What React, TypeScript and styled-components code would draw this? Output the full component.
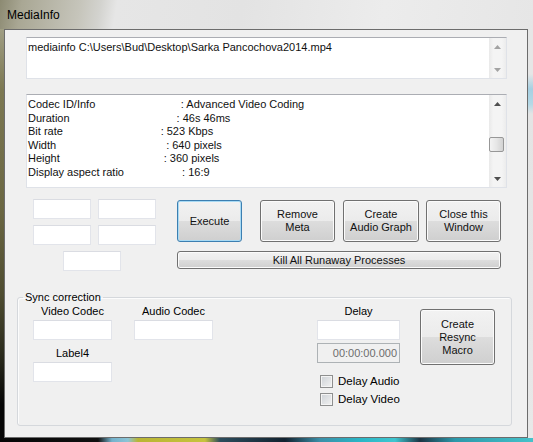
import React from "react";
import styled, { createGlobalStyle } from "styled-components";

const GlobalStyle = createGlobalStyle`
  html, body {
    margin: 0;
    padding: 0;
  }
  body {
    width: 533px;
    height: 442px;
    overflow: hidden;
    background: #000;
    font-family: "Liberation Sans", Arial, sans-serif;
  }
`;

// Window frame (Aero glass look)
const Window = styled.div`
  width: 533px;
  height: 442px;
  display: grid;
  grid-template-columns: 4px 1fr 5px;
  grid-template-rows: 29px 1fr 4px;
`;

const TitleBar = styled.div`
  grid-column: 1 / -1;
  display: flex;
  align-items: center;
  padding-left: 7px;
  font-size: 12px;
  color: #000;
  background: linear-gradient(
    100deg,
    #8c8a72 0px,
    #a9a794 22px,
    #c6c5bb 80px,
    #d3d3cf 100px,
    #e6e6e6 116px,
    #e3e3e3 240px,
    #ececec 380px,
    #e6e6e6 100%
  );
`;

const LeftEdge = styled.div`
  background: linear-gradient(
    #a09e84 0%,
    #7c7852 15%,
    #6a6642 45%,
    #4e4c30 65%,
    #2a2a1c 80%,
    #050505 92%
  );
`;

const RightEdge = styled.div`
  background: linear-gradient(
    #e6e6e6 0px,
    #e6e6e6 45px,
    #a6d0e2 60px,
    #b4d8e6 75px,
    #e4e4e4 85px,
    #e8e8e8 100%
  );
`;

const BottomEdge = styled.div`
  grid-column: 1 / -1;
  background: linear-gradient(
    to right,
    #060606 0px,
    #101010 98px,
    #74b2cc 112px,
    #8cc4d6 128px,
    #b9b534 138px,
    #c6c33e 205px,
    #2c4c5c 220px,
    #122230 285px,
    #3b8fa8 320px,
    #2ab6c6 360px,
    #3fc6d0 395px,
    #1c3444 420px,
    #2c98aa 455px,
    #46c2ca 533px
  );
`;

const Client = styled.div`
  grid-column: 2;
  grid-row: 2;
  background: #f0f0f0;
  border: 1px solid #6c6c6c;
  display: flex;
  flex-direction: column;
  padding-top: 7px;
  font-size: 11px;
  color: #000;
  overflow: hidden;
`;

// Multi-line text boxes
const TextBox = styled.div<{ $height: number }>`
  box-sizing: border-box;
  margin: 0 20px 0 21px;
  height: ${(p) => p.$height}px;
  display: flex;
  background: #fff;
  border: 1px solid #dfe2e8;
  border-top-color: #abadb3;
  & + & {
    margin-top: 15px;
  }
`;

const TextContent = styled.div`
  flex: 1;
  padding: 3px 1px;
  white-space: pre;
  line-height: 13.5px;
  overflow: hidden;
  color: #111;
`;

const ScrollBar = styled.div`
  width: 17px;
  display: flex;
  flex-direction: column;
  background: linear-gradient(to right, #e9e9e9, #f4f4f4 25%, #f4f4f4 75%, #ececec);
`;

const ArrowButton = styled.div`
  height: 17px;
  display: flex;
  align-items: center;
  justify-content: center;
`;

const Track = styled.div`
  flex: 1;
`;

const Thumb = styled.div<{ $top: number }>`
  margin: ${(p) => p.$top}px 2px 0 0;
  height: 15px;
  border: 1px solid #979797;
  border-radius: 2px;
  background: linear-gradient(to right, #f3f3f3, #e6e6e6 50%, #d2d2d2);
  box-sizing: border-box;
`;

const Arrow = ({ up, color }: { up?: boolean; color: string }) => (
  <svg width="7" height="4" viewBox="0 0 7 4">
    <path d={up ? "M0 4 L3.5 0 L7 4 Z" : "M0 0 L3.5 4 L7 0 Z"} fill={color} />
  </svg>
);

// Controls row
const Controls = styled.div`
  display: flex;
  margin: 11px 0 0 28px;
`;

const FieldGrid = styled.div`
  display: grid;
  grid-template-columns: 58px 58px;
  grid-auto-rows: 20px;
  column-gap: 7px;
  row-gap: 6px;
`;

const Field = styled.div<{ $width?: number; $offset?: number }>`
  box-sizing: border-box;
  width: ${(p) => p.$width ?? 58}px;
  height: 20px;
  margin-left: ${(p) => p.$offset ?? 0}px;
  background: #fff;
  border: 1px solid #e2e4ea;
  border-top-color: #dadce2;
`;

const WideField = styled(Field)`
  grid-column: 1 / -1;
`;

const ButtonArea = styled.div`
  margin: 1px 0 0 21px;
  display: flex;
  flex-direction: column;
  gap: 9px;
`;

const ButtonRow = styled.div`
  display: flex;
`;

const Button = styled.div<{ $width: number; $height: number; $focused?: boolean; $gap?: number }>`
  box-sizing: border-box;
  width: ${(p) => p.$width}px;
  height: ${(p) => p.$height}px;
  margin-left: ${(p) => p.$gap ?? 0}px;
  display: flex;
  align-items: center;
  justify-content: center;
  text-align: center;
  line-height: 13px;
  color: #111;
  border: 1px solid ${(p) => (p.$focused ? "#3c7fb1" : "#707070")};
  border-radius: 3px;
  background: linear-gradient(#f2f2f2 0%, #ebebeb 50%, #dddddd 50%, #cfcfcf 100%);
  box-shadow: inset 0 0 0 1px ${(p) => (p.$focused ? "#a8daf4" : "#fbfbfb")};
`;

// Sync correction group
const Group = styled.fieldset`
  margin: 20px 0 0 12px;
  padding: 0;
  width: 495px;
  height: 135px;
  box-sizing: border-box;
  border: 1px solid #d5d8dc;
  border-radius: 3px;
  box-shadow: inset 1px 1px 0 #fcfcfc;
  min-inline-size: 0;
`;

const Legend = styled.legend`
  margin-left: 5px;
  padding: 0 2px;
  line-height: 13px;
`;

const GroupBody = styled.div`
  display: flex;
  padding: 0 16px 0 15px;
`;

const Column = styled.div<{ $width: number; $gap?: number }>`
  width: ${(p) => p.$width}px;
  margin-left: ${(p) => p.$gap ?? 0}px;
  display: flex;
  flex-direction: column;
  padding-top: 1px;
`;

const Caption = styled.div<{ $space?: number }>`
  height: 13px;
  line-height: 13px;
  text-align: center;
  margin-top: ${(p) => p.$space ?? 0}px;
  margin-bottom: 2px;
`;

const Spacer = styled.div`
  flex: 1;
`;

const TimeBox = styled.div`
  box-sizing: border-box;
  height: 20px;
  margin-top: 3px;
  padding-right: 2px;
  display: flex;
  align-items: center;
  justify-content: flex-end;
  color: #6d6d6d;
  background: #f0f0f0;
  border: 1px solid #adb2b5;
`;

const CheckRow = styled.div<{ $space: number }>`
  height: 14px;
  margin: ${(p) => p.$space}px 0 0 3px;
  display: flex;
  align-items: center;
  gap: 5px;
  font-size: 11.5px;
`;

const CheckBox = styled.div`
  box-sizing: border-box;
  width: 13px;
  height: 13px;
  border: 1px solid #8e8f8f;
  box-shadow: inset 0 0 0 1px #f4f4f4;
  background: linear-gradient(135deg, #cdd1d6, #f2f2f2);
`;

const ResyncButton = styled(Button)`
  margin-top: 5px;
`;

const infoLines: [string, number, string][] = [
  ["Codec ID/Info", 28, "Advanced Video Coding"],
  ["Duration", 35, "46s 46ms"],
  ["Bit rate", 32, "523 Kbps"],
  ["Width", 36, "640 pixels"],
  ["Height", 34, "360 pixels"],
  ["Display aspect ratio", 19, "16:9"],
];

export default function App() {
  return (
    <>
      <GlobalStyle />
      <Window>
        <TitleBar>MediaInfo</TitleBar>
        <LeftEdge />
        <Client>
          <TextBox $height={42}>
            <TextContent>mediainfo C:\Users\Bud\Desktop\Sarka Pancochova2014.mp4</TextContent>
            <ScrollBar>
              <ArrowButton>
                <Arrow up color="#a3a3a3" />
              </ArrowButton>
              <Track />
              <ArrowButton>
                <Arrow color="#a3a3a3" />
              </ArrowButton>
            </ScrollBar>
          </TextBox>
          <TextBox $height={94}>
            <TextContent>
              {infoLines.map(([name, pad, value]) => name + " ".repeat(pad) + ": " + value).join("\n")}
            </TextContent>
            <ScrollBar>
              <ArrowButton>
                <Arrow up color="#4f4f4f" />
              </ArrowButton>
              <Track>
                <Thumb $top={25} />
              </Track>
              <ArrowButton>
                <Arrow color="#4f4f4f" />
              </ArrowButton>
            </ScrollBar>
          </TextBox>

          <Controls>
            <FieldGrid>
              <Field />
              <Field />
              <Field />
              <Field />
              <WideField $offset={30} />
            </FieldGrid>
            <ButtonArea>
              <ButtonRow>
                <Button $width={65} $height={42} $focused>
                  Execute
                </Button>
                <Button $width={75} $height={42} $gap={18}>
                  Remove
                  <br />
                  Meta
                </Button>
                <Button $width={76} $height={42} $gap={8}>
                  Create
                  <br />
                  Audio Graph
                </Button>
                <Button $width={75} $height={42} $gap={7}>
                  Close this
                  <br />
                  Window
                </Button>
              </ButtonRow>
              <Button $width={324} $height={18}>
                Kill All Runaway Processes
              </Button>
            </ButtonArea>
          </Controls>

          <Group>
            <Legend>Sync correction</Legend>
            <GroupBody>
              <Column $width={79}>
                <Caption>Video Codec</Caption>
                <Field $width={79} />
                <Caption $space={7}>Label4</Caption>
                <Field $width={79} />
              </Column>
              <Column $width={79} $gap={22}>
                <Caption>Audio Codec</Caption>
                <Field $width={79} />
              </Column>
              <Spacer />
              <Column $width={83}>
                <Caption>Delay</Caption>
                <Field $width={83} />
                <TimeBox>00:00:00.000</TimeBox>
                <CheckRow $space={11}>
                  <CheckBox />
                  Delay Audio
                </CheckRow>
                <CheckRow $space={4}>
                  <CheckBox />
                  Delay Video
                </CheckRow>
              </Column>
              <ResyncButton $width={75} $height={56} $gap={20}>
                Create
                <br />
                Resync
                <br />
                Macro
              </ResyncButton>
            </GroupBody>
          </Group>
        </Client>
        <RightEdge />
        <BottomEdge />
      </Window>
    </>
  );
}
